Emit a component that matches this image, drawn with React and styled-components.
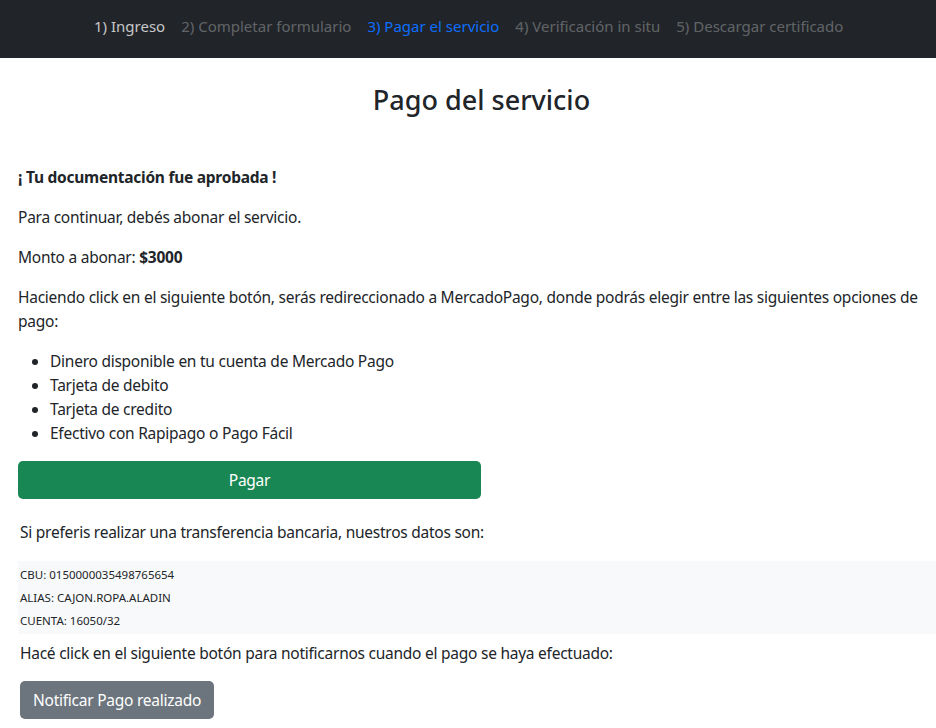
import React from "react";
import styled, { createGlobalStyle } from "styled-components";

const Global = createGlobalStyle`
  html, body { margin: 0; padding: 0; background: #fff; }
  body { font-family: "Noto Sans", "Open Sans", sans-serif; color: #212529; font-size: 15.5px; letter-spacing: -0.25px; overflow: hidden; }
  * { box-sizing: border-box; }
`;

const Nav = styled.nav`
  height: 58px;
  background: #212529;
  display: flex;
  align-items: center;
  padding-left: 86px;
  letter-spacing: 0;
`;

const NavLink = styled.span`
  padding: 0 8px;
  font-size: 15px;
  color: ${(p) => (p.$active ? "#0d6efd" : p.$done ? "rgba(255,255,255,0.75)" : "rgba(255,255,255,0.3)")};
  margin-top: -6px;
  white-space: nowrap;
`;

const Main = styled.main`
  padding: 0 0 0 18px;
`;

const Title = styled.h2`
  margin: 26px 0 49px;
  padding-left: 9px;
  text-align: center;
  font-size: 27px;
  font-weight: 500;
  line-height: 1.2;
  letter-spacing: 0;
`;

const P = styled.p`
  margin: ${(p) => p.$top ?? 0}px 0 ${(p) => p.$bottom ?? 16}px;
  line-height: 24px;
  padding-right: 12px;
  padding-left: ${(p) => p.$indent || 0}px;
`;

const List = styled.ul`
  margin: 0 0 16px;
  padding-left: 32px;
  line-height: 24px;
`;

const Button = styled.button`
  font: inherit;
  letter-spacing: inherit;
  font-size: 15.5px;
  color: #fff;
  border: none;
  border-radius: 5px;
  height: 38px;
  cursor: pointer;
  background: ${(p) => (p.$variant === "secondary" ? "#6c757d" : "#198754")};
  width: ${(p) => (p.$block ? "463px" : "auto")};
  padding: 0 13px;
  margin-left: ${(p) => p.$indent || 0}px;
  display: block;
`;

const BankBox = styled.div`
  background: #f8f9fa;
  margin: 17px 0 7px;
  padding: 2px 0 2px 2px;
  display: flex;
  flex-direction: column;
`;

const BankLine = styled.span`
  font-size: 11.5px;
  letter-spacing: 0;
  line-height: 23px;
`;

const Strong = styled.strong`
  font-weight: 700;
`;

export default function App() {
  return (
    <>
      <Global />
      <Nav>
        <NavLink $done>1) Ingreso</NavLink>
        <NavLink>2) Completar formulario</NavLink>
        <NavLink $active>3) Pagar el servicio</NavLink>
        <NavLink>4) Verificación in situ</NavLink>
        <NavLink>5) Descargar certificado</NavLink>
      </Nav>
      <Main>
        <Title>Pago del servicio</Title>
        <P><Strong>¡ Tu documentación fue aprobada !</Strong></P>
        <P>Para continuar, debés abonar el servicio.</P>
        <P>Monto a abonar: <Strong>$3000</Strong></P>
        <P>
          Haciendo click en el siguiente botón, serás redireccionado a MercadoPago, donde podrás elegir entre las siguientes opciones de pago:
        </P>
        <List>
          <li>Dinero disponible en tu cuenta de Mercado Pago</li>
          <li>Tarjeta de debito</li>
          <li>Tarjeta de credito</li>
          <li>Efectivo con Rapipago o Pago Fácil</li>
        </List>
        <Button $block>Pagar</Button>
        <P $indent={2} $top={21} $bottom={0}>
          Si preferis realizar una transferencia bancaria, nuestros datos son:
        </P>
        <BankBox>
          <BankLine>CBU: 0150000035498765654</BankLine>
          <BankLine>ALIAS: CAJON.ROPA.ALADIN</BankLine>
          <BankLine>CUENTA: 16050/32</BankLine>
        </BankBox>
        <P $indent={2}>Hacé click en el siguiente botón para notificarnos cuando el pago se haya efectuado:</P>
        <Button $variant="secondary" $indent={2}>Notificar Pago realizado</Button>
      </Main>
    </>
  );
}
